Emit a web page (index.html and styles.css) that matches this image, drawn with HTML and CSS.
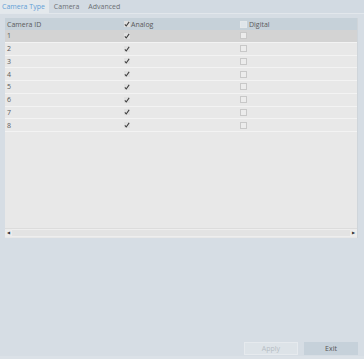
FILE: index.html
```html
<!DOCTYPE html>
<html lang="en">
<head>
    <meta charset="UTF-8">
    <title>Camera Type</title>
    <link rel="stylesheet" href="styles.css">
</head>
<body>
    <div class="tabs">
        <div class="tab active">Camera Type</div>
        <div class="tab">Camera</div>
        <div class="tab">Advanced</div>
    </div>

    <div class="panel">
        <div class="row head">
            <span class="cell">Camera ID</span>
            <span class="cell"><svg class="chk" viewBox="0 0 7 7"><path d="M1 4l1.6 1.8L6 1" /></svg>Analog</span>
            <span class="cell"><span class="box"></span>Digital</span>
        </div>
        <div class="row selected">
            <span class="cell">1</span>
            <span class="cell"><svg class="chk" viewBox="0 0 7 7"><path d="M1 4l1.6 1.8L6 1" /></svg></span>
            <span class="cell"><span class="box"></span></span>
        </div>
        <div class="row"><span class="cell">2</span><span class="cell"><svg class="chk" viewBox="0 0 7 7"><path d="M1 4l1.6 1.8L6 1" /></svg></span><span class="cell"><span class="box"></span></span></div>
        <div class="row"><span class="cell">3</span><span class="cell"><svg class="chk" viewBox="0 0 7 7"><path d="M1 4l1.6 1.8L6 1" /></svg></span><span class="cell"><span class="box"></span></span></div>
        <div class="row"><span class="cell">4</span><span class="cell"><svg class="chk" viewBox="0 0 7 7"><path d="M1 4l1.6 1.8L6 1" /></svg></span><span class="cell"><span class="box"></span></span></div>
        <div class="row"><span class="cell">5</span><span class="cell"><svg class="chk" viewBox="0 0 7 7"><path d="M1 4l1.6 1.8L6 1" /></svg></span><span class="cell"><span class="box"></span></span></div>
        <div class="row"><span class="cell">6</span><span class="cell"><svg class="chk" viewBox="0 0 7 7"><path d="M1 4l1.6 1.8L6 1" /></svg></span><span class="cell"><span class="box"></span></span></div>
        <div class="row"><span class="cell">7</span><span class="cell"><svg class="chk" viewBox="0 0 7 7"><path d="M1 4l1.6 1.8L6 1" /></svg></span><span class="cell"><span class="box"></span></span></div>
        <div class="row"><span class="cell">8</span><span class="cell"><svg class="chk" viewBox="0 0 7 7"><path d="M1 4l1.6 1.8L6 1" /></svg></span><span class="cell"><span class="box"></span></span></div>

        <div class="hscroll">
            <span class="arrow">&#9664;</span>
            <span class="track"></span>
            <span class="arrow">&#9654;</span>
        </div>
    </div>

    <div class="footer">
        <button class="btn disabled">Apply</button>
        <button class="btn">Exit</button>
    </div>
</body>
</html>
```

FILE: styles.css
```css
html, body {
    margin: 0;
    height: 100%;
}

body {
    font-family: 'Open Sans', 'Liberation Sans', sans-serif;
    font-size: 7px;
    color: #5a5a5a;
    background-color: #d6dde4;
    display: flex;
    flex-direction: column;
    box-sizing: border-box;
    border-bottom: 3px solid #dbe1e7;
}

/* Tabs */
.tabs {
    display: flex;
    height: 13px;
    background-color: #d2dae2;
    border-bottom: 1px solid #e2e7ec;
}

.tab {
    padding: 0 4px 0 5px;
    line-height: 13px;
    color: #6b6f73;
}

.tab.active {
    padding: 0 4px 0 2px;
    background-color: #e3e8ec;
    color: #62a0d6;
}

/* Table panel */
.panel {
    margin: 4px 6px 0 5px;
    height: 220px;
    background-color: #e8e8e8;
    border-right: 1px solid #cfd5da;
    display: flex;
    flex-direction: column;
    box-sizing: border-box;
}

.row {
    display: grid;
    grid-template-columns: 119px 116px 1fr;
    height: 12.75px;
    align-items: center;
    border-bottom: 1px solid #f3f3f3;
    box-sizing: border-box;
}

.row.head {
    height: 12px;
    background-color: #c6d1d9;
    border-bottom: none;
}

.row.selected {
    background-color: #d3d3d3;
}

.cell {
    display: flex;
    align-items: center;
    white-space: nowrap;
}

.cell:first-child {
    padding-left: 2px;
}

.chk {
    width: 6px;
    height: 6px;
    margin-right: 1px;
    fill: none;
    stroke: #3a3a3a;
    stroke-width: 1.2;
    background-color: #e0e0e0;
}

.box {
    width: 5px;
    height: 5px;
    margin-right: 2px;
    border: 1px solid #c8c8c8;
    background-color: #ececec;
}

.row.head .box {
    border-color: #e4e8eb;
    background-color: #dfe5ea;
}

/* Horizontal scrollbar */
.hscroll {
    margin-top: auto;
    margin-bottom: 1px;
    height: 8px;
    display: flex;
    align-items: center;
    border-top: 1px solid #dcdcdc;
}

.arrow {
    width: 7px;
    height: 8px;
    font-size: 4px;
    line-height: 8px;
    text-align: center;
    color: #333;
    background-color: #ececec;
}

.track {
    flex: 1;
    height: 6px;
    background-color: #e3e3e3;
    border-top: 1px solid #eee;
    border-bottom: 1px solid #eee;
}

/* Footer buttons */
.footer {
    margin-top: auto;
    display: flex;
    justify-content: flex-end;
    gap: 6px;
    padding: 0 6px 1px 0;
}

.btn {
    width: 54px;
    height: 13px;
    padding: 0;
    font-family: inherit;
    font-size: 7px;
    color: #555;
    background-color: #c6d1da;
    border: none;
}

.btn.disabled {
    color: #b6bdc4;
    background-color: #dde3e8;
    border: 1px solid #e6eaee;
}
```
